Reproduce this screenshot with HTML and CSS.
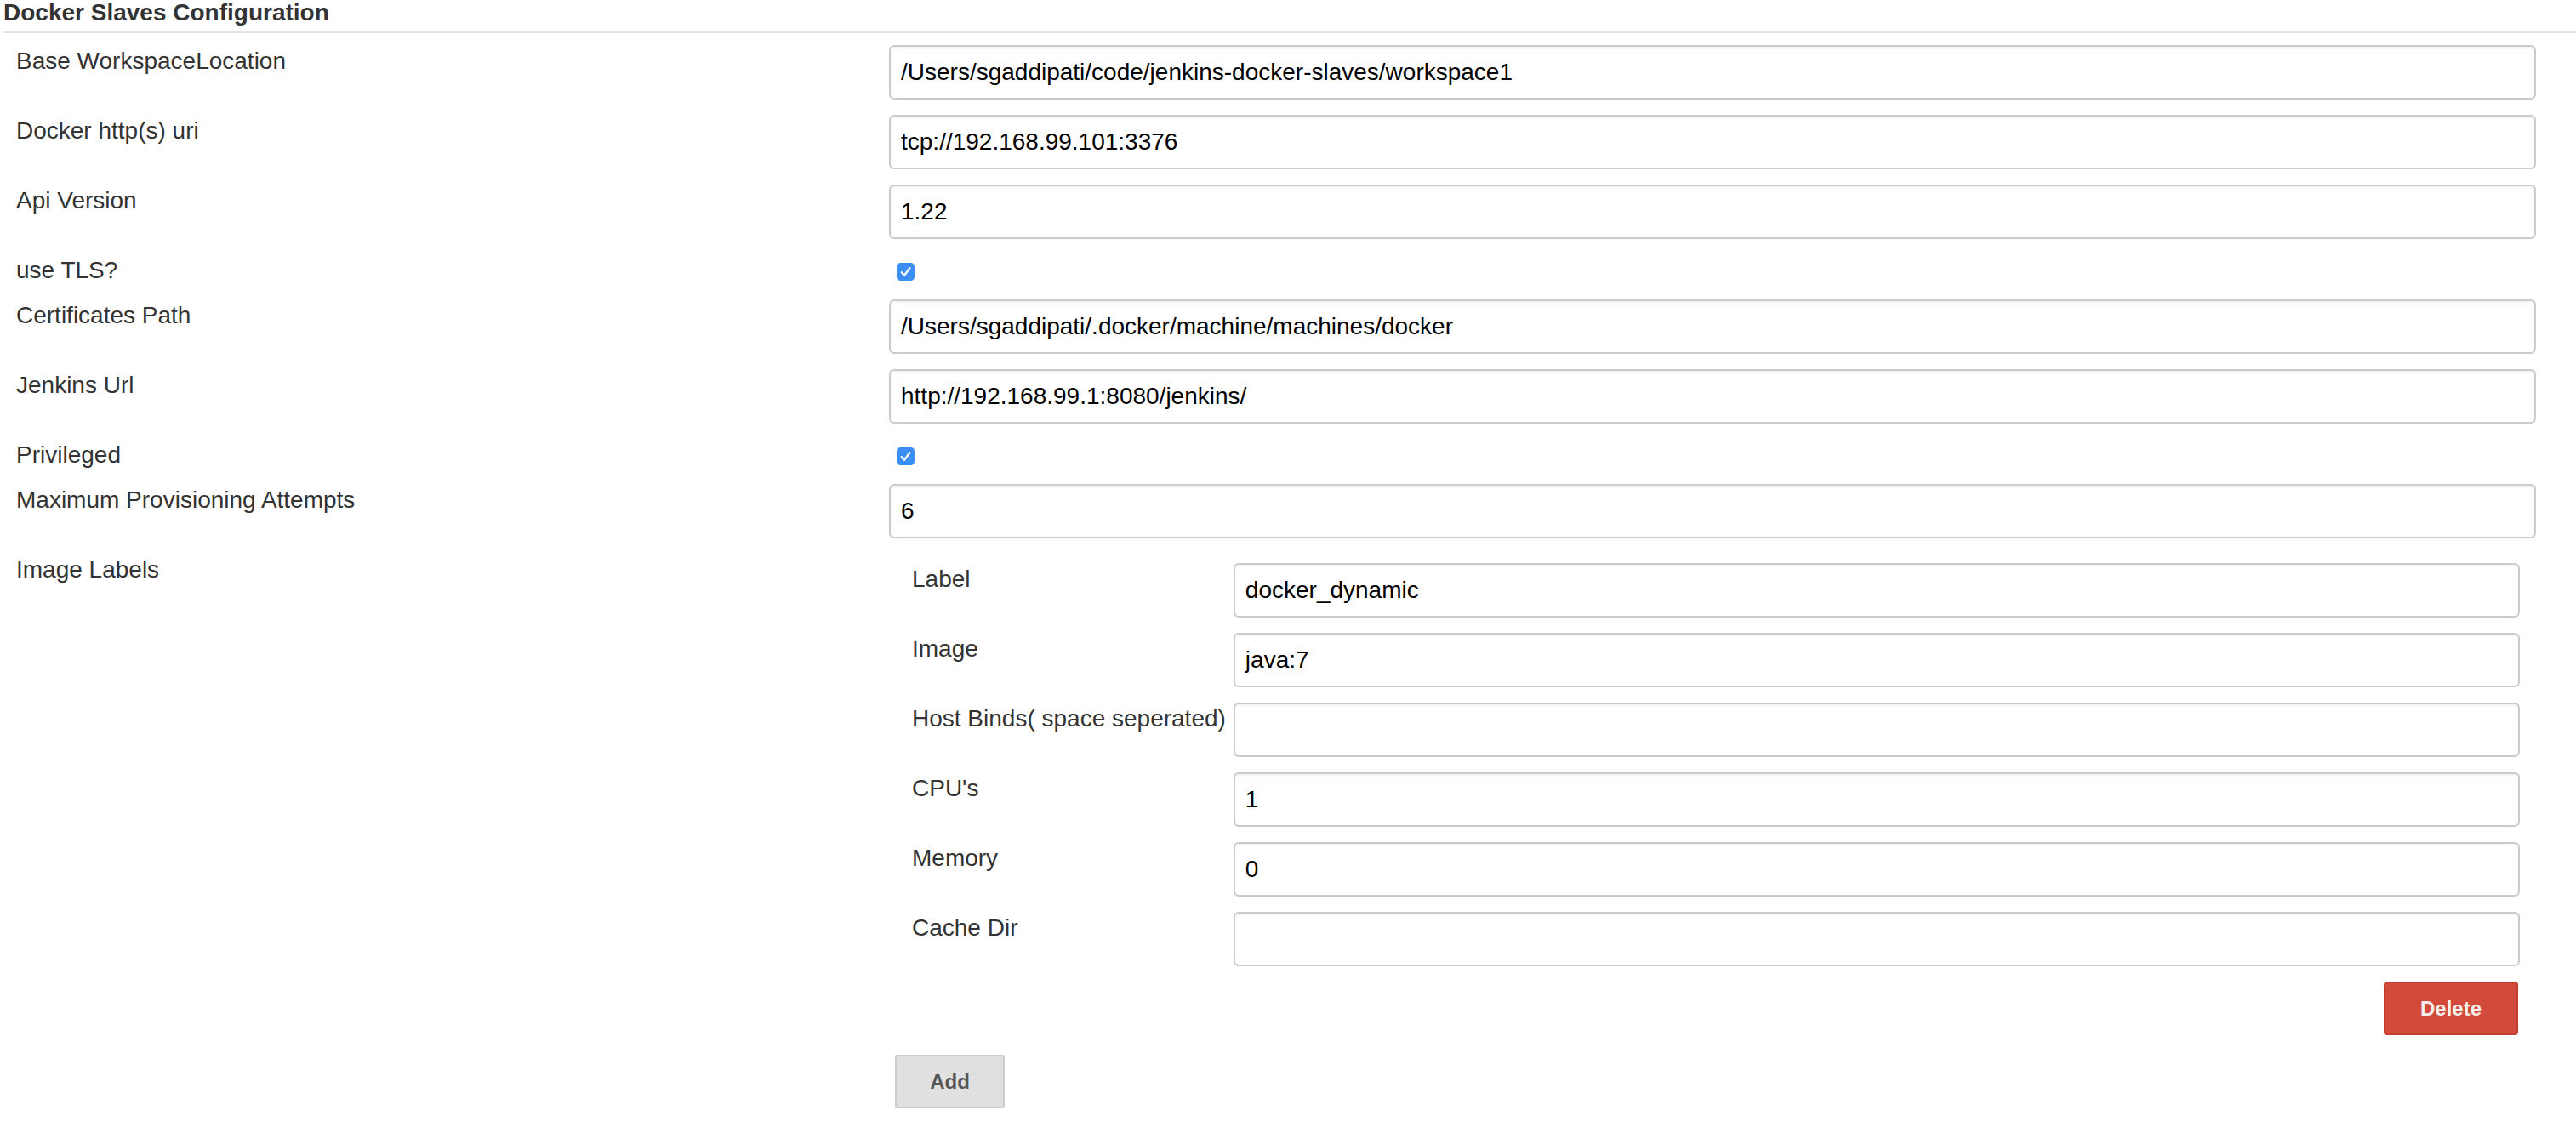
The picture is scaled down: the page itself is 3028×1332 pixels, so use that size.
FILE: index.html
```html
<!DOCTYPE html>
<html lang="en">
<head>
<meta charset="utf-8">
<title>Docker Slaves Configuration</title>
<link rel="stylesheet" href="styles.css">
</head>
<body>
<div class="section">
  <div class="section-header">Docker Slaves Configuration</div>
  <div class="form">
    <div class="row">
      <div class="name">Base WorkspaceLocation</div>
      <div class="main"><input class="text" type="text" value="/Users/sgaddipati/code/jenkins-docker-slaves/workspace1"></div>
    </div>
    <div class="row">
      <div class="name">Docker http(s) uri</div>
      <div class="main"><input class="text" type="text" value="tcp://192.168.99.101:3376"></div>
    </div>
    <div class="row">
      <div class="name">Api Version</div>
      <div class="main"><input class="text" type="text" value="1.22"></div>
    </div>
    <div class="row">
      <div class="name">use TLS?</div>
      <div class="main check-cell">
        <span class="checkbox" role="checkbox" aria-checked="true"><svg viewBox="0 0 21 21" width="21" height="21"><rect x="0" y="0" width="21" height="21" rx="4.5" fill="#3a8ef6"/><path d="M5.8 11.2 L9 14.8 L15.4 6.2" fill="none" stroke="#fff" stroke-width="2.4" stroke-linecap="round" stroke-linejoin="round"/></svg></span>
      </div>
    </div>
    <div class="row">
      <div class="name">Certificates Path</div>
      <div class="main"><input class="text" type="text" value="/Users/sgaddipati/.docker/machine/machines/docker"></div>
    </div>
    <div class="row">
      <div class="name">Jenkins Url</div>
      <div class="main"><input class="text" type="text" value="http://192.168.99.1:8080/jenkins/"></div>
    </div>
    <div class="row">
      <div class="name">Privileged</div>
      <div class="main check-cell">
        <span class="checkbox" role="checkbox" aria-checked="true"><svg viewBox="0 0 21 21" width="21" height="21"><rect x="0" y="0" width="21" height="21" rx="4.5" fill="#3a8ef6"/><path d="M5.8 11.2 L9 14.8 L15.4 6.2" fill="none" stroke="#fff" stroke-width="2.4" stroke-linecap="round" stroke-linejoin="round"/></svg></span>
      </div>
    </div>
    <div class="row">
      <div class="name">Maximum Provisioning Attempts</div>
      <div class="main"><input class="text" type="text" value="6"></div>
    </div>
    <div class="row">
      <div class="name">Image Labels</div>
      <div class="main">
        <div class="repeated">
          <div class="sub-form">
            <div class="sub-name">Label</div>
            <input class="text" type="text" value="docker_dynamic">
            <div class="sub-name">Image</div>
            <input class="text" type="text" value="java:7">
            <div class="sub-name">Host Binds( space seperated)</div>
            <input class="text" type="text" value="">
            <div class="sub-name">CPU's</div>
            <input class="text" type="text" value="1">
            <div class="sub-name">Memory</div>
            <input class="text" type="text" value="0">
            <div class="sub-name">Cache Dir</div>
            <input class="text" type="text" value="">
          </div>
          <div class="repeated-actions">
            <button class="btn btn-delete" type="button">Delete</button>
          </div>
        </div>
        <button class="btn btn-add" type="button">Add</button>
      </div>
    </div>
  </div>
</div>
</body>
</html>
```

FILE: styles.css
```css
html, body {
  margin: 0;
  padding: 0;
  background: #ffffff;
}

body {
  font-family: "Liberation Sans", Arial, Helvetica, sans-serif;
  font-size: 28px;
  color: #333333;
}

.section {
  width: 3028px;
}

.section-header {
  margin-left: 4px;
  font-weight: bold;
  font-size: 28px;
  line-height: 30px;
  color: #333333;
  padding-bottom: 7px;
  border-bottom: 2px solid #e3e3e3;
}

.form {
  display: flex;
  flex-direction: column;
  gap: 18px;
  margin-top: 14px;
  padding-left: 19px;
  padding-right: 47px;
}

.row {
  display: grid;
  grid-template-columns: 1026px 1fr;
}

.name {
  padding-top: 3px;
  line-height: 32px;
  color: #333333;
}

.main {
  min-width: 0;
}

.text {
  display: block;
  box-sizing: border-box;
  width: 100%;
  height: 64px;
  margin: 0;
  padding: 0 12px;
  border: 2px solid #cbcbcb;
  border-radius: 6px;
  box-shadow: inset 0 2px 3px rgba(0, 0, 0, 0.05);
  background: #ffffff;
  font-family: "Liberation Sans", Arial, Helvetica, sans-serif;
  font-size: 28px;
  color: #000000;
  outline: none;
}

.check-cell {
  height: 35px;
  box-sizing: border-box;
  padding-top: 10px;
  padding-left: 9px;
}

.checkbox {
  display: block;
  width: 21px;
  height: 21px;
}

.checkbox svg {
  display: block;
}

.repeated {
  padding: 11px 19px 0 27px;
}

.sub-form {
  display: grid;
  grid-template-columns: max-content 1fr;
  column-gap: 9px;
  row-gap: 18px;
}

.sub-name {
  padding-top: 3px;
  line-height: 32px;
  color: #333333;
}

.repeated-actions {
  display: flex;
  justify-content: flex-end;
  margin-top: 18px;
  padding-right: 2px;
}

.btn {
  display: block;
  box-sizing: border-box;
  height: 63px;
  margin: 0;
  font-family: "Liberation Sans", Arial, Helvetica, sans-serif;
  font-size: 24px;
  font-weight: bold;
  cursor: pointer;
}

.btn-delete {
  width: 158px;
  background: #d24a3a;
  border: 2px solid #c23d2e;
  border-radius: 4px;
  color: #f4efee;
}

.btn-add {
  width: 129px;
  margin-top: 23px;
  margin-left: 7px;
  background: #e0e0e0;
  border: 2px solid #cccccc;
  border-radius: 2px;
  color: #555555;
}
```
